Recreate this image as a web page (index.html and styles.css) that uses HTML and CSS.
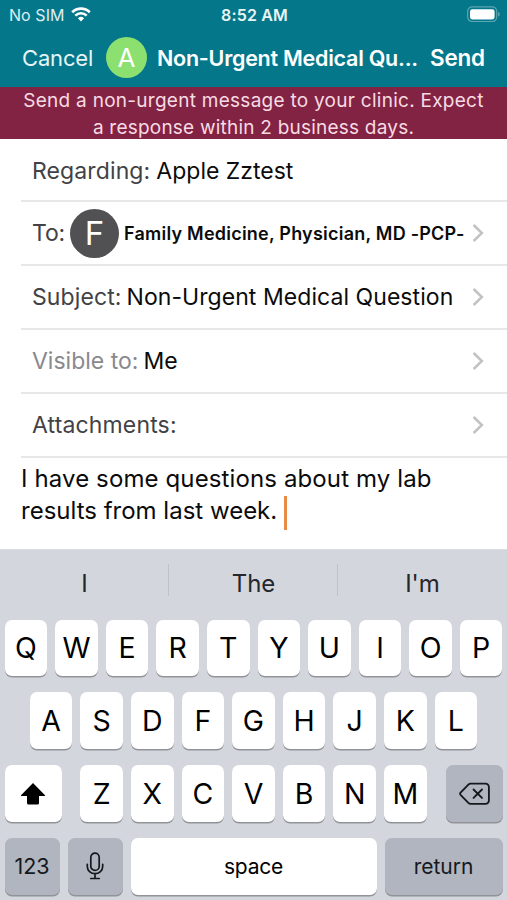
FILE: index.html
```
<!DOCTYPE html>
<html lang="en">
<head>
<meta charset="utf-8">
<title>Non-Urgent Medical Question</title>
<link rel="stylesheet" href="styles.css">
</head>
<body>
<div class="phone">
  <header class="header">
    <div class="status">
      <div class="carrier">
        <span>No SIM</span>
        <svg class="wifi" width="20" height="15" viewBox="0 0 20 15" fill="none" stroke="#fff">
          <path d="M1.2 5.3a12.6 12.6 0 0 1 17.6 0" stroke-width="2.7"/>
          <path d="M4.3 8.6a8.2 8.2 0 0 1 11.4 0" stroke-width="2.6"/>
          <path d="M10 14.5 6.9 11.3a4.5 4.5 0 0 1 6.2 0z" fill="#fff" stroke="none"/>
        </svg>
      </div>
      <div class="time">8:52 AM</div>
      <div class="power">
        <svg width="33" height="17" viewBox="0 0 33 17">
          <rect x=".7" y=".9" width="29" height="14.6" rx="4.4" fill="none" stroke="#fff" stroke-opacity=".35" stroke-width="1.2"/>
          <rect x="3" y="3.2" width="24.6" height="10.2" rx="2.4" fill="#fff"/>
          <path d="M31.2 5.8c1.9.7 1.9 4 0 4.8z" fill="#fff" fill-opacity=".4"/>
        </svg>
      </div>
    </div>
    <nav class="nav">
      <span class="cancel">Cancel</span>
      <span class="avatar avatar-green">A</span>
      <h1 class="title">Non-Urgent Medical Qu...</h1>
      <span class="send">Send</span>
    </nav>
  </header>

  <div class="banner">Send a non-urgent message to your clinic. Expect<br><span class="tight">a response within 2 business days.</span></div>

  <main class="form">
    <div class="row row-first"><span class="label regarding">Regarding:</span><span class="value">Apple Zztest</span></div>
    <div class="row"><span class="label to">To:</span><span class="avatar avatar-gray">F</span><span class="recipient">Family Medicine, Physician, MD -PCP-</span>
      <svg class="chevron" width="12" height="20" viewBox="0 0 12 20"><path d="M1.6 2 9.9 10l-8.3 8"/></svg></div>
    <div class="row"><span class="label subject">Subject:</span><span class="value question">Non-Urgent Medical Question</span>
      <svg class="chevron" width="12" height="20" viewBox="0 0 12 20"><path d="M1.6 2 9.9 10l-8.3 8"/></svg></div>
    <div class="row"><span class="label muted">Visible to:</span><span class="value">Me</span>
      <svg class="chevron" width="12" height="20" viewBox="0 0 12 20"><path d="M1.6 2 9.9 10l-8.3 8"/></svg></div>
    <div class="row"><span class="label attachments">Attachments:</span>
      <svg class="chevron" width="12" height="20" viewBox="0 0 12 20"><path d="M1.6 2 9.9 10l-8.3 8"/></svg></div>
    <div class="message"><span class="line1">I have some questions about my lab</span><br>results from last week.<span class="caret"></span></div>
  </main>

  <section class="keyboard">
    <div class="suggestions"><span>I</span><span>The</span><span>I'm</span></div>
    <div class="keys">
      <span class="key">Q</span><span class="key">W</span><span class="key">E</span><span class="key">R</span><span class="key">T</span><span class="key">Y</span><span class="key">U</span><span class="key">I</span><span class="key">O</span><span class="key">P</span>
    </div>
    <div class="keys">
      <span class="key">A</span><span class="key">S</span><span class="key">D</span><span class="key">F</span><span class="key">G</span><span class="key">H</span><span class="key">J</span><span class="key">K</span><span class="key">L</span>
    </div>
    <div class="keys keys-spread">
      <span class="key wide">
        <svg width="26" height="23" viewBox="0 0 26 23"><path d="M13 1 25 13.2q.5.8-.5.8H19v7q0 1.5-1.5 1.5h-9Q7 22.5 7 21v-7H1.5q-1 0-.5-.8z" fill="#000"/></svg>
      </span>
      <div class="letters">
        <span class="key">Z</span><span class="key">X</span><span class="key">C</span><span class="key">V</span><span class="key">B</span><span class="key">N</span><span class="key">M</span>
      </div>
      <span class="key wide gray">
        <svg width="31" height="24" viewBox="0 0 32 25" fill="none" stroke="#15181d" stroke-width="1.9" stroke-linecap="round" stroke-linejoin="round">
          <path d="M12 1.7h15.500a3.500 3.500 0 0 1 3.500 3.500v14a3.500 3.500 0 0 1-3.500 3.500H12q-1.400 0-2.400-1L1.500 13.400q-1-1.200 0-2.400L9.600 2.700q1-1 2.400-1z"/>
          <path d="m15 7.800 8.800 8.800M23.800 7.800 15 16.600"/>
        </svg>
      </span>
    </div>
    <div class="keys keys-bottom">
      <span class="key gray numbers">123</span>
      <span class="key gray">
        <svg width="18" height="28" viewBox="0 0 18 28" fill="none" stroke="#15181d" stroke-width="1.7" stroke-linecap="round">
          <rect x="4.8" y="1.2" width="8.4" height="17.2" rx="4.2"/>
          <path d="M1.3 12.3v2.200a7.700 7.200 0 0 0 15.400 0v-2.200M9 21.800v4.600M4.800 26.500h8.400"/>
        </svg>
      </span>
      <span class="key word space">space</span>
      <span class="key word gray">return</span>
    </div>
  </section>
</div>
</body>
</html>
```
FILE: styles.css
```
* {
  box-sizing: border-box;
}

body {
  margin: 0;
  font-family: Inter, "Liberation Sans", sans-serif;
  color: #0b0b0c;
  background: #fff;
}

.phone {
  width: 507px;
  height: 900px;
  display: flex;
  flex-direction: column;
  overflow: hidden;
}

/* Header */
.header {
  height: 87px;
  flex: none;
  background: #05778a;
  color: #fff;
}

.status {
  height: 30px;
  display: grid;
  grid-template-columns: 1fr auto 1fr;
  align-items: center;
  padding: 0 7px 0 9px;
  font-size: 16px;
  line-height: 30px;
}

.carrier {
  display: flex;
  align-items: center;
  gap: 6px;
  color: #dceef1;
  letter-spacing: 0.06px;
}

.wifi {
  margin-top: -2px;
}

.time {
  font-weight: 600;
  letter-spacing: 0.15px;
  color: #e8f5f6;
}

.power {
  display: flex;
  justify-content: flex-end;
  margin-top: -2px;
}

.nav {
  height: 55px;
  display: flex;
  align-items: center;
  padding-left: 22px;
  font-size: 22px;
  white-space: nowrap;
}

.cancel {
  width: 84px;
  letter-spacing: -0.16px;
  color: #e8f5f6;
}

.avatar {
  flex: none;
  display: flex;
  align-items: center;
  justify-content: center;
  border-radius: 50%;
  color: #fff;
}

.avatar-green {
  width: 41px;
  height: 41px;
  background: #8ce06f;
  font-size: 26px;
}

.title {
  margin: 0 0 0 10px;
  width: 273px;
  font-size: 21.5px;
  font-weight: 600;
  letter-spacing: -0.25px;
}

.send {
  font-size: 22.5px;
  font-weight: 600;
  letter-spacing: -0.23px;
}

.banner {
  height: 52px;
  flex: none;
  overflow: hidden;
  padding-top: 1px;
  background: #832343;
  color: #f7dbe4;
  text-align: center;
  font-size: 19px;
  line-height: 26.7px;
  letter-spacing: 0.27px;
  white-space: nowrap;
}

.tight {
  letter-spacing: 0.22px;
}

/* Form */
.form {
  height: 410px;
  flex: none;
}

.row {
  height: 64px;
  margin-left: 21px;
  padding: 0 23px 0 11px;
  border-bottom: 2px solid #e7e7e9;
  display: flex;
  align-items: center;
  font-size: 23px;
  white-space: nowrap;
}

.row-first {
  height: 63px;
  padding-top: 2px;
}

.label {
  color: #424246;
  margin-right: 7px;
}

.regarding {
  letter-spacing: 0.12px;
  margin-right: 6px;
}

.to {
  letter-spacing: -0.17px;
  margin-right: 5px;
}

.subject {
  letter-spacing: 0.1px;
  margin-right: 5px;
}

.muted {
  color: #89898d;
  margin-right: 5px;
}

.attachments {
  letter-spacing: 0.15px;
}

.question {
  letter-spacing: 0.06px;
}

.avatar-gray {
  width: 49px;
  height: 49px;
  background: #515154;
  font-size: 33px;
}

.recipient {
  margin-left: 5px;
  font-size: 18px;
  font-weight: 600;
  letter-spacing: 0.23px;
}

.chevron {
  margin-left: auto;
  flex: none;
  fill: none;
  stroke: #c2c2c5;
  stroke-width: 2.5;
}

.message {
  padding: 5px 0 0 21px;
  font-size: 24px;
  line-height: 32.3px;
  white-space: nowrap;
}

.line1 {
  letter-spacing: 0.12px;
}

.caret {
  display: inline-block;
  width: 3px;
  height: 34px;
  margin: -4px 0 -4px 7px;
  vertical-align: -7px;
  background: #e88b45;
}

/* Keyboard */
.keyboard {
  flex: 1;
  background: #d3d6dc;
  border-top: 1px solid #dcdee1;
  padding: 0 4.5px;
}

.suggestions {
  height: 69.5px;
  margin: 0 -4.5px;
  padding-bottom: 2px;
  display: grid;
  grid-template-columns: repeat(3, 1fr);
  align-items: center;
  text-align: center;
  font-size: 24px;
  line-height: 34px;
  color: #24272d;
  background:
    linear-gradient(#bfc2c8, #bfc2c8) 168px 14px / 1px 32px no-repeat,
    linear-gradient(#bfc2c8, #bfc2c8) 337px 14px / 1px 32px no-repeat;
}

.keys {
  height: 56.5px;
  margin-bottom: 16.4px;
  display: flex;
  justify-content: center;
  gap: 8px;
}

.key {
  width: 42.6px;
  height: 56.5px;
  flex: none;
  display: flex;
  align-items: center;
  justify-content: center;
  border-radius: 7px;
  background: #fff;
  box-shadow: 0 1.5px 0 #919398;
  color: #000;
  font-size: 28.5px;
}

.keys-spread {
  justify-content: space-between;
}

.letters {
  display: flex;
  gap: 8px;
}

.wide {
  width: 57px;
}

.gray {
  background: #b0b5bf;
  color: #15181d;
}

.keys-bottom {
  display: grid;
  grid-template-columns: 55px 55px 1fr 118px;
}

.keys-bottom .key {
  width: auto;
}

.keys-bottom .numbers {
  font-size: 21.5px;
}

.keys-bottom .word {
  font-size: 21px;
}

.keys-bottom .space {
  letter-spacing: -0.2px;
}
```
